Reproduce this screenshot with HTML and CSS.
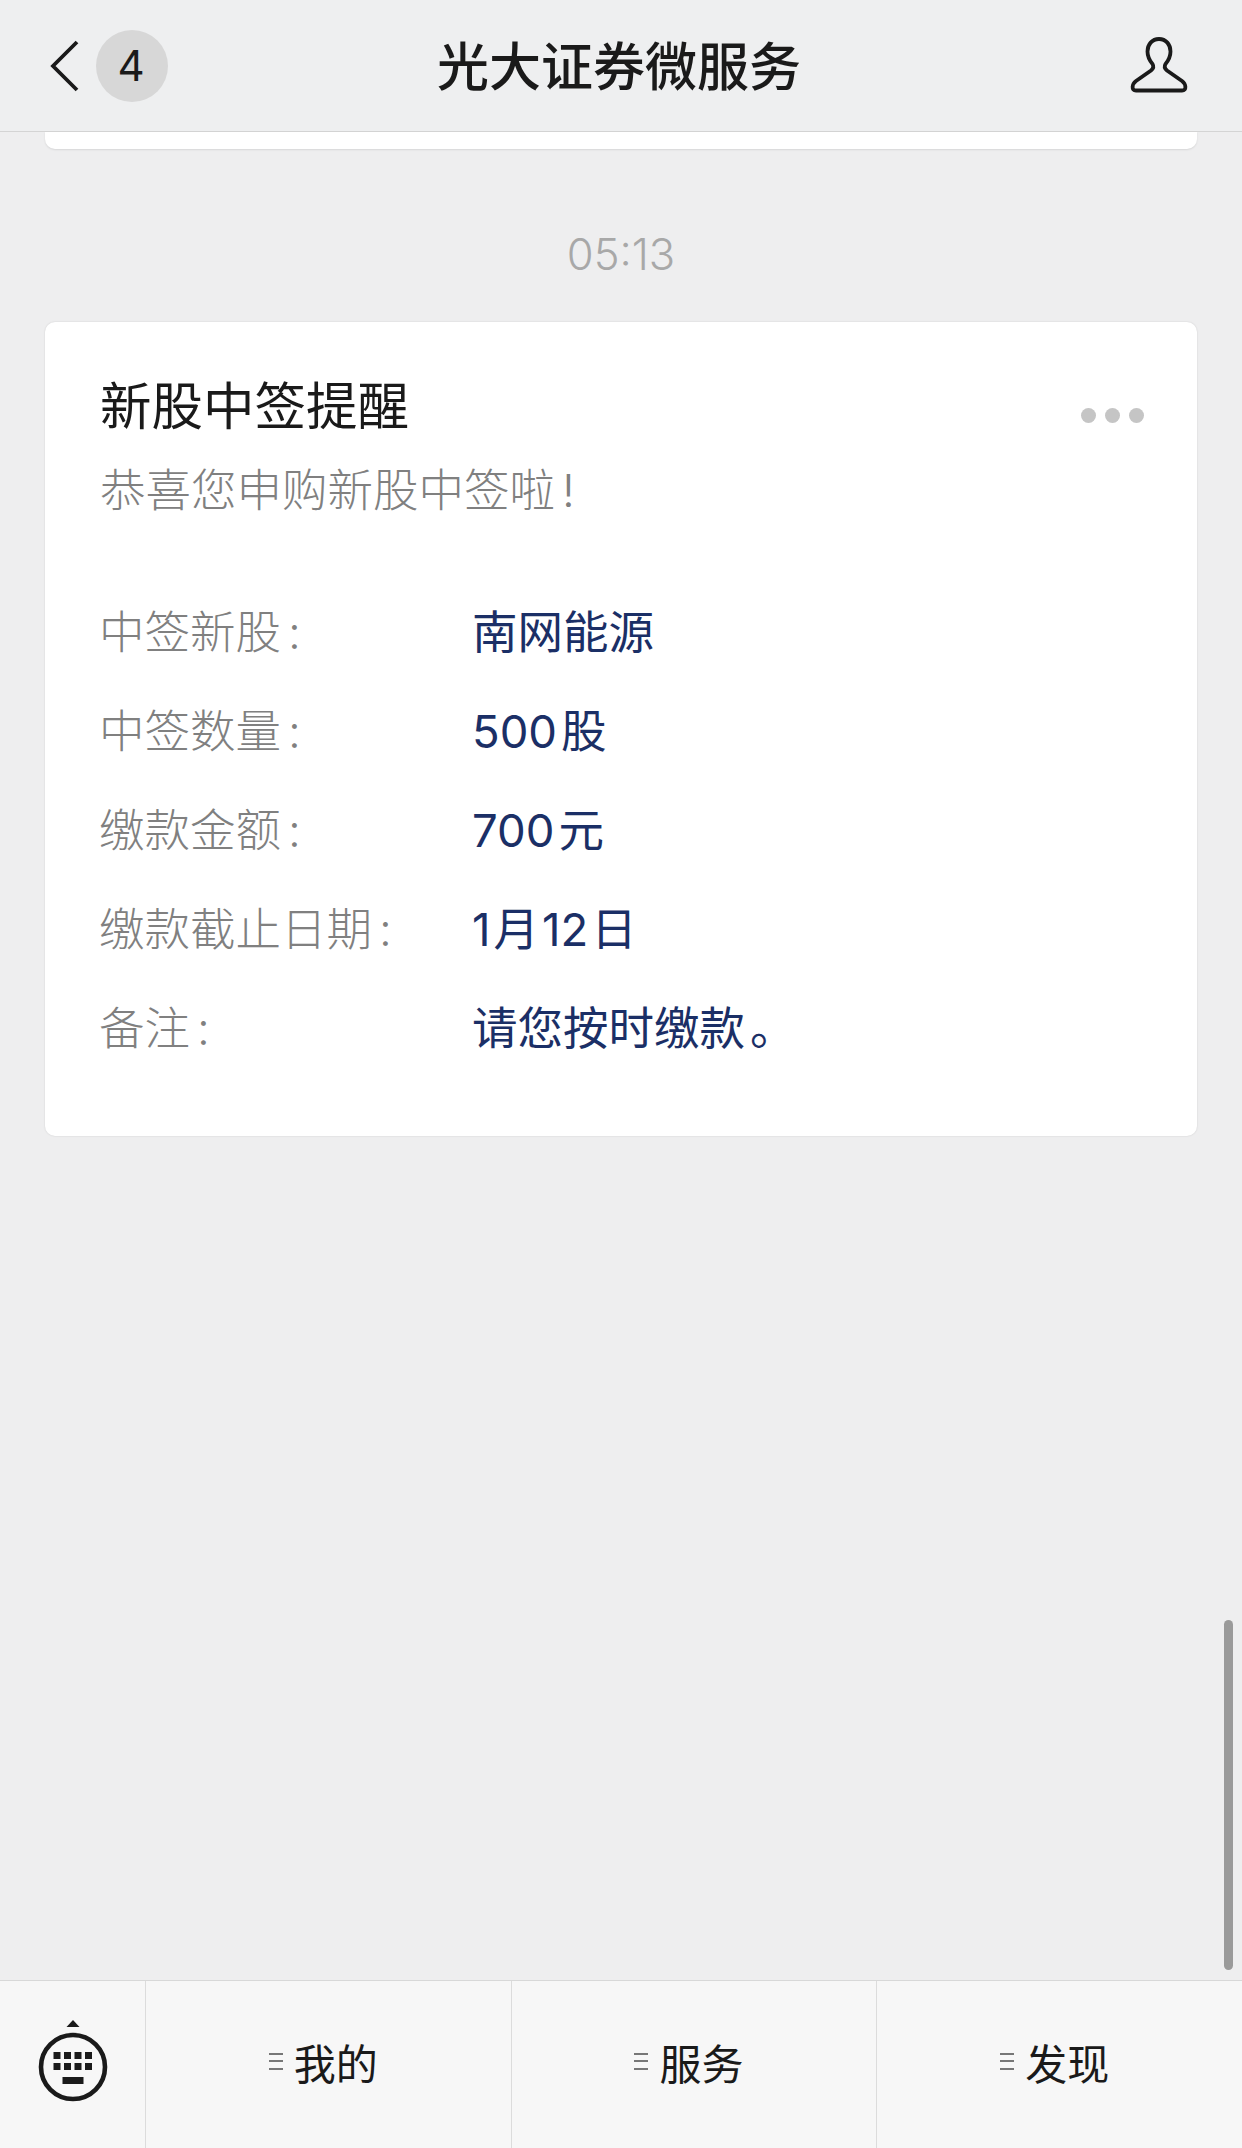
FILE: index.html
```html
<!DOCTYPE html>
<html lang="zh-CN">
<head>
<meta charset="utf-8">
<title>光大证券微服务</title>
<link rel="stylesheet" href="styles.css">
</head>
<body>
<div class="app">
  <header class="header">
    <div class="nav-left">
      <svg class="chevron" width="30" height="52" viewBox="0 0 30 52"><path d="M27 2 L3 26 L27 50" fill="none" stroke="#1a1a1a" stroke-width="3.8"/></svg>
      <span class="badge">4</span>
    </div>
    <h1 class="title">光大证券微服务</h1>
    <svg class="person" width="58" height="56" viewBox="0 0 58 56"><path d="M29 2 C22 2 17.500 7.500 17.500 14.500 C17.500 20 20 24 22.500 27 C24 29.500 23.500 31.500 21 33.500 L6 44 C2 47 1 53.500 6 53.500 L52 53.500 C57 53.500 56 47 52 44 L37 33.500 C34.500 31.500 34 29.500 35.500 27 C38 24 40.500 20 40.500 14.500 C40.500 7.500 36 2 29 2 Z" fill="none" stroke="#1a1a1a" stroke-width="3.8"/></svg>
  </header>
  <main class="feed">
    <div class="card-stub"></div>
    <div class="time">05:13</div>
    <section class="card">
      <div class="card-head">
        <h2 class="card-title">新股中签提醒</h2>
        <div class="dots"><i></i><i></i><i></i></div>
      </div>
      <p class="card-sub">恭喜您申购新股中签啦<span class="gap">!</span></p>
      <dl class="rows">
        <div class="row"><dt>中签新股<span class="gap">:</span></dt><dd>南网能源</dd></div>
        <div class="row"><dt>中签数量<span class="gap">:</span></dt><dd>500<span class="nudge">股</span></dd></div>
        <div class="row"><dt>缴款金额<span class="gap">:</span></dt><dd>700<span class="nudge">元</span></dd></div>
        <div class="row"><dt>缴款截止日期<span class="gap">:</span></dt><dd>1<span class="nudge-s">月</span><span class="nudge-s">12</span><span class="nudge-s">日</span></dd></div>
        <div class="row"><dt>备注<span class="gap">:</span></dt><dd>请您按时缴款<span class="nudge-end">。</span></dd></div>
      </dl>
    </section>
    <div class="scrollbar"></div>
  </main>
  <footer class="tabbar">
    <div class="kbd-cell">
      <svg width="72" height="84" viewBox="0 0 72 84">
        <path d="M29.500 7 L36 0 L42.500 7 Z" fill="#1a1a1a"/>
        <circle cx="36" cy="47" r="32" fill="none" stroke="#1a1a1a" stroke-width="4.600"/>
        <g fill="#1a1a1a">
          <rect x="16.500" y="32" width="7" height="7"/><rect x="27" y="32" width="7" height="7"/><rect x="37.500" y="32" width="7" height="7"/><rect x="48" y="32" width="7" height="7"/>
          <rect x="16.500" y="43" width="7" height="7"/><rect x="27" y="43" width="7" height="7"/><rect x="37.500" y="43" width="7" height="7"/><rect x="48" y="43" width="7" height="7"/>
          <rect x="25.500" y="57" width="21" height="7"/>
        </g>
      </svg>
    </div>
    <div class="tab"><span class="burger"><i></i><i></i><i></i></span><span>我的</span></div>
    <div class="tab"><span class="burger"><i></i><i></i><i></i></span><span>服务</span></div>
    <div class="tab"><span class="burger"><i></i><i></i><i></i></span><span>发现</span></div>
  </footer>
</div>
</body>
</html>
```

FILE: styles.css
```css
* { box-sizing: border-box; }
html, body { margin: 0; padding: 0; }
body {
  font-family: "Inter", "Noto Sans CJK SC", "Liberation Sans", sans-serif;
  background: #eeeeef;
  color: #1a1a1a;
}
.app { display: flex; flex-direction: column; height: 2148px; overflow: hidden; }

.header {
  flex: none;
  height: 132px;
  display: grid;
  grid-template-columns: 1fr auto 1fr;
  align-items: center;
  padding: 0 54px 0 50px;
  background: #eeeff0;
  border-bottom: 1px solid #d4d4d4;
}
.nav-left { display: flex; align-items: center; gap: 16px; }
.badge {
  width: 72px;
  height: 72px;
  padding-right: 2px;
  border-radius: 50%;
  background: #d7d7d7;
  display: flex;
  align-items: center;
  justify-content: center;
  font-size: 42px;
  color: #1a1a1a;
}
.title {
  margin: -3px 0 0;
  font-size: 52px;
  line-height: 60px;
  font-weight: 500;
  font-family: "Noto Sans CJK SC", sans-serif;
  color: #1a1a1a;
}
.person { margin-top: -2px; justify-self: end; }

.feed { position: relative; flex: 1; padding: 0 45px; min-height: 0; }
.card-stub {
  height: 17px;
  background: #fff;
  border-radius: 0 0 10px 10px;
  box-shadow: 0 1px 2px rgba(0, 0, 0, .1);
}
.time {
  margin: 75px 0 38px;
  text-align: center;
  font-size: 43.500px;
  line-height: 60px;
  font-weight: 300;
  color: #a8a8a8;
}
.card {
  height: 814px;
  padding: 54px 56px 0 55px;
  background: #fff;
  border-radius: 10px;
  box-shadow: 0 0 2px rgba(0, 0, 0, .14);
}
.card-head { display: flex; justify-content: space-between; align-items: center; height: 60px; }
.card-title {
  margin: 0;
  font-size: 51.500px;
  line-height: 60px;
  font-weight: 400;
  color: #1a1a1a;
}
.dots { display: flex; gap: 9px; margin: 19px -3px 0 0; }
.dots i { width: 15px; height: 15px; border-radius: 50%; background: #c5c5c5; }
.card-sub {
  margin: 24.500px 0 0;
  font-size: 45.500px;
  line-height: 60px;
  font-weight: 300;
  color: #808080;
}
.rows { margin: 59px 0 0; }
.row {
  display: grid;
  grid-template-columns: 372px 1fr;
  height: 99px;
  align-items: center;
  font-size: 45.500px;
  font-weight: 300;
}
.row dt { margin-left: -1px; color: #808080; }
.row dd { margin: 0; color: #1b2f66; font-weight: 400; }
.gap { margin-left: 7px; }
.nudge { margin-left: 4px; }
.nudge-s { margin-left: 3px; }
.nudge-end { margin-left: 5px; }

.scrollbar {
  position: absolute;
  right: 9px;
  bottom: 10px;
  width: 9px;
  height: 350px;
  border-radius: 5px;
  background: #9a9a9a;
}

.tabbar {
  flex: none;
  height: 168px;
  display: grid;
  grid-template-columns: 145px 1fr 1fr 1fr;
  background: #f7f7f7;
  border-top: 1px solid #d8d8d8;
}
.kbd-cell { display: flex; align-items: flex-start; justify-content: center; padding-top: 39px; }
.tab {
  display: flex;
  align-items: center;
  justify-content: center;
  gap: 11px;
  padding: 0 10px 7px 0;
  border-left: 1px solid #dcdcdc;
  font-size: 42px;
  font-weight: 400;
  font-family: "Noto Sans CJK SC", sans-serif;
  color: #1a1a1a;
}
.burger { display: flex; flex-direction: column; gap: 5.500px; }
.burger i { display: block; width: 14px; height: 2px; background: #777; }
```
